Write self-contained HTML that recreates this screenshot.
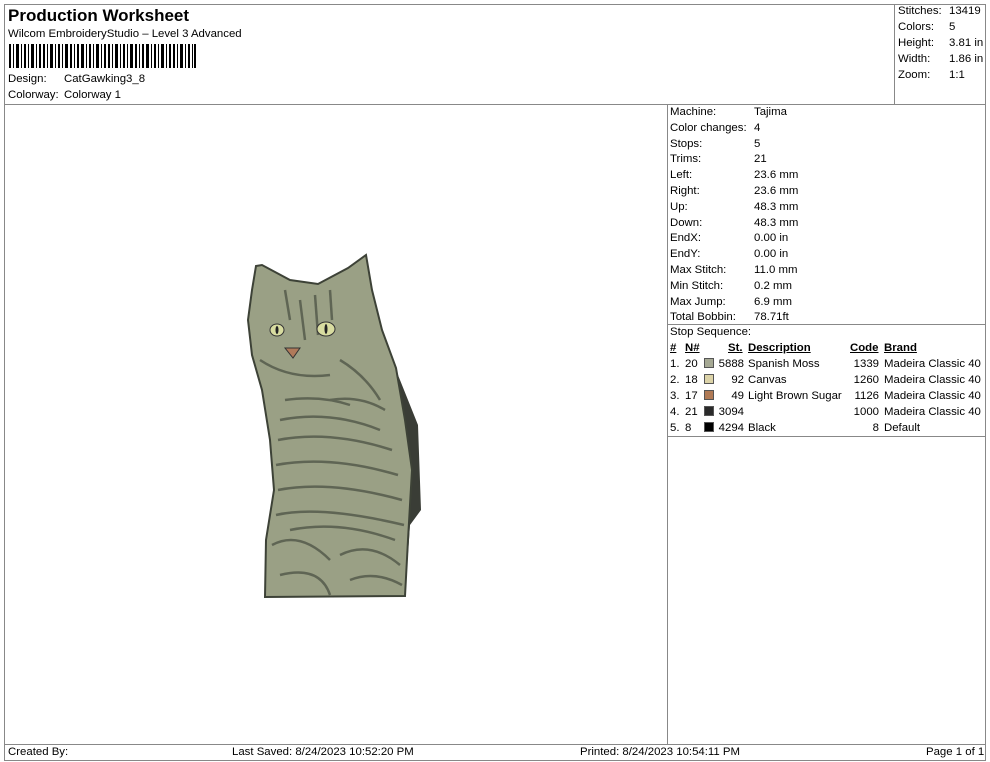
<!DOCTYPE html>
<html><head><style>
*{margin:0;padding:0;box-sizing:border-box}
body{width:990px;height:762px;background:#fff;font-family:"Liberation Sans",Arial,sans-serif;font-size:11.4px;color:#000;position:relative;overflow:hidden}
.a{position:absolute}
.ln{position:absolute;background:#888}
.t{position:absolute;white-space:nowrap;font-size:11.4px;line-height:13px}
u{text-decoration:underline}
.sw{display:inline-block;width:10px;height:10px;border:1px solid #555;vertical-align:-1px}
</style></head><body>
<div class="ln" style="left:4px;top:4px;width:982px;height:1px"></div>
<div class="ln" style="left:4px;top:4px;width:1px;height:757px"></div>
<div class="ln" style="left:985px;top:4px;width:1px;height:757px"></div>
<div class="ln" style="left:4px;top:104px;width:982px;height:1px"></div>
<div class="ln" style="left:894px;top:4px;width:1px;height:100px"></div>
<div class="ln" style="left:667px;top:104px;width:1px;height:640px"></div>
<div class="ln" style="left:667px;top:324px;width:319px;height:1px"></div>
<div class="ln" style="left:667px;top:436px;width:319px;height:1px"></div>
<div class="ln" style="left:4px;top:744px;width:982px;height:1px"></div>
<div class="ln" style="left:4px;top:760px;width:982px;height:1px"></div>

<div class="t" style="left:8px;top:6px;font-size:17px;line-height:20px;font-weight:bold">Production Worksheet</div>
<div class="t" style="left:8px;top:28px">Wilcom EmbroideryStudio – Level 3 Advanced</div>
<svg class="a" style="left:9px;top:44px" width="187" height="24">
<g fill="#000">
<rect x="0" width="2" height="24"/><rect x="4" width="1" height="24"/><rect x="7" width="3" height="24"/><rect x="12" width="1" height="24"/><rect x="15" width="2" height="24"/><rect x="19" width="1" height="24"/><rect x="22" width="3" height="24"/><rect x="27" width="1" height="24"/><rect x="30" width="2" height="24"/><rect x="34" width="2" height="24"/><rect x="38" width="1" height="24"/><rect x="41" width="3" height="24"/><rect x="46" width="1" height="24"/><rect x="49" width="2" height="24"/><rect x="53" width="1" height="24"/><rect x="56" width="3" height="24"/><rect x="61" width="2" height="24"/><rect x="65" width="1" height="24"/><rect x="68" width="2" height="24"/><rect x="72" width="3" height="24"/><rect x="77" width="1" height="24"/><rect x="80" width="2" height="24"/><rect x="84" width="1" height="24"/><rect x="87" width="3" height="24"/><rect x="92" width="1" height="24"/><rect x="95" width="2" height="24"/><rect x="99" width="2" height="24"/><rect x="103" width="1" height="24"/><rect x="106" width="3" height="24"/><rect x="111" width="1" height="24"/><rect x="114" width="2" height="24"/><rect x="118" width="1" height="24"/><rect x="121" width="3" height="24"/><rect x="126" width="2" height="24"/><rect x="130" width="1" height="24"/><rect x="133" width="2" height="24"/><rect x="137" width="3" height="24"/><rect x="142" width="1" height="24"/><rect x="145" width="2" height="24"/><rect x="149" width="1" height="24"/><rect x="152" width="3" height="24"/><rect x="157" width="1" height="24"/><rect x="160" width="2" height="24"/><rect x="164" width="2" height="24"/><rect x="168" width="1" height="24"/><rect x="171" width="3" height="24"/><rect x="176" width="1" height="24"/><rect x="179" width="2" height="24"/><rect x="183" width="1" height="24"/><rect x="185" width="2" height="24"/>
</g></svg>
<div class="t" style="left:8px;top:73px">Design:</div><div class="t" style="left:64px;top:73px">CatGawking3_8</div>
<div class="t" style="left:8px;top:89px">Colorway:</div><div class="t" style="left:64px;top:89px">Colorway 1</div>

<div class="t" style="left:898px;top:5px">Stitches:</div><div class="t" style="left:949px;top:5px">13419</div>
<div class="t" style="left:898px;top:21px">Colors:</div><div class="t" style="left:949px;top:21px">5</div>
<div class="t" style="left:898px;top:37px">Height:</div><div class="t" style="left:949px;top:37px">3.81 in</div>
<div class="t" style="left:898px;top:53px">Width:</div><div class="t" style="left:949px;top:53px">1.86 in</div>
<div class="t" style="left:898px;top:69px">Zoom:</div><div class="t" style="left:949px;top:69px">1:1</div>

<div class="a" style="left:670px;top:105px;line-height:15.8px">
Machine:<br>Color changes:<br>Stops:<br>Trims:<br>Left:<br>Right:<br>Up:<br>Down:<br>EndX:<br>EndY:<br>Max Stitch:<br>Min Stitch:<br>Max Jump:<br>Total Bobbin:</div>
<div class="a" style="left:754px;top:105px;line-height:15.8px">
Tajima<br>4<br>5<br>21<br>23.6 mm<br>23.6 mm<br>48.3 mm<br>48.3 mm<br>0.00 in<br>0.00 in<br>11.0 mm<br>0.2 mm<br>6.9 mm<br>78.71ft</div>

<div class="t" style="left:670px;top:326px">Stop Sequence:</div>
<div class="t" style="left:670px;top:342px;font-weight:bold"><u>#</u></div>
<div class="t" style="left:685px;top:342px;font-weight:bold"><u>N#</u></div>
<div class="t" style="left:728px;top:342px;font-weight:bold"><u>St.</u></div>
<div class="t" style="left:748px;top:342px;font-weight:bold"><u>Description</u></div>
<div class="t" style="left:850px;top:342px;font-weight:bold"><u>Code</u></div>
<div class="t" style="left:884px;top:342px;font-weight:bold"><u>Brand</u></div>

<div class="t" style="left:670px;top:358px">1.</div><div class="t" style="left:685px;top:358px">20</div><span class="a sw" style="left:704px;top:358px;background:#a6a994"></span><div class="t" style="left:716px;top:358px;width:28px;text-align:right">5888</div><div class="t" style="left:748px;top:358px">Spanish Moss</div><div class="t" style="left:846px;top:358px;width:33px;text-align:right">1339</div><div class="t" style="left:884px;top:358px">Madeira Classic 40</div>
<div class="t" style="left:670px;top:374px">2.</div><div class="t" style="left:685px;top:374px">18</div><span class="a sw" style="left:704px;top:374px;background:#dcd3a8"></span><div class="t" style="left:716px;top:374px;width:28px;text-align:right">92</div><div class="t" style="left:748px;top:374px">Canvas</div><div class="t" style="left:846px;top:374px;width:33px;text-align:right">1260</div><div class="t" style="left:884px;top:374px">Madeira Classic 40</div>
<div class="t" style="left:670px;top:390px">3.</div><div class="t" style="left:685px;top:390px">17</div><span class="a sw" style="left:704px;top:390px;background:#b07a55"></span><div class="t" style="left:716px;top:390px;width:28px;text-align:right">49</div><div class="t" style="left:748px;top:390px">Light Brown Sugar</div><div class="t" style="left:846px;top:390px;width:33px;text-align:right">1126</div><div class="t" style="left:884px;top:390px">Madeira Classic 40</div>
<div class="t" style="left:670px;top:406px">4.</div><div class="t" style="left:685px;top:406px">21</div><span class="a sw" style="left:704px;top:406px;background:#2a2a2a"></span><div class="t" style="left:716px;top:406px;width:28px;text-align:right">3094</div><div class="t" style="left:846px;top:406px;width:33px;text-align:right">1000</div><div class="t" style="left:884px;top:406px">Madeira Classic 40</div>
<div class="t" style="left:670px;top:422px">5.</div><div class="t" style="left:685px;top:422px">8</div><span class="a sw" style="left:704px;top:422px;background:#000"></span><div class="t" style="left:716px;top:422px;width:28px;text-align:right">4294</div><div class="t" style="left:748px;top:422px">Black</div><div class="t" style="left:846px;top:422px;width:33px;text-align:right">8</div><div class="t" style="left:884px;top:422px">Default</div>

<svg class="a" style="left:0;top:0" width="667" height="744">
<path d="M394,365 L418,425 L421,510 L410,525 L405,596 L390,596 L395,380Z" fill="#3a3d36"/>
<path d="M256,266 L262,265 L290,280 L318,284 L348,268 L366,255 L372,290 L382,330 L396,368 L405,420 L412,470 L408,540 L405,596 L265,597 L266,540 L274,490 L270,440 L262,390 L252,355 L248,320 L252,290Z" fill="#9aa085" stroke="#3d4237" stroke-width="2"/>
<g stroke="#555b4c" stroke-width="2.5" fill="none" opacity="0.85">
<path d="M280,420 Q330,410 380,430"/><path d="M278,440 Q330,430 392,450"/><path d="M276,465 Q330,455 398,475"/><path d="M278,490 Q330,480 402,500"/><path d="M276,515 Q320,505 404,525"/><path d="M272,545 Q300,530 330,560"/><path d="M340,555 Q370,540 400,565"/><path d="M280,575 Q320,565 330,595"/><path d="M300,300 L305,340"/><path d="M315,295 L318,335"/><path d="M260,360 Q290,380 330,375"/><path d="M340,360 Q365,375 380,400"/><path d="M330,400 Q360,395 385,410"/>
<path d="M330,290 L332,320"/><path d="M285,290 L290,320"/><path d="M285,400 Q320,395 350,405"/><path d="M290,530 Q340,520 395,540"/><path d="M350,580 Q375,570 402,585"/>
</g>
<ellipse cx="277" cy="330" rx="7" ry="6" fill="#d8dca0" stroke="#333"/>
<ellipse cx="326" cy="329" rx="9" ry="7" fill="#d8dca0" stroke="#333"/>
<ellipse cx="277" cy="330" rx="1.5" ry="4" fill="#222"/><ellipse cx="326" cy="329" rx="1.5" ry="5" fill="#222"/>
<path d="M285,348 L300,348 L293,358Z" fill="#b07a5a" stroke="#333"/>
</svg>

<div class="t" style="left:8px;top:746px">Created By:</div>
<div class="t" style="left:232px;top:746px">Last Saved: 8/24/2023 10:52:20 PM</div>
<div class="t" style="left:580px;top:746px">Printed: 8/24/2023 10:54:11 PM</div>
<div class="t" style="left:926px;top:746px">Page 1 of 1</div>
</body></html>
